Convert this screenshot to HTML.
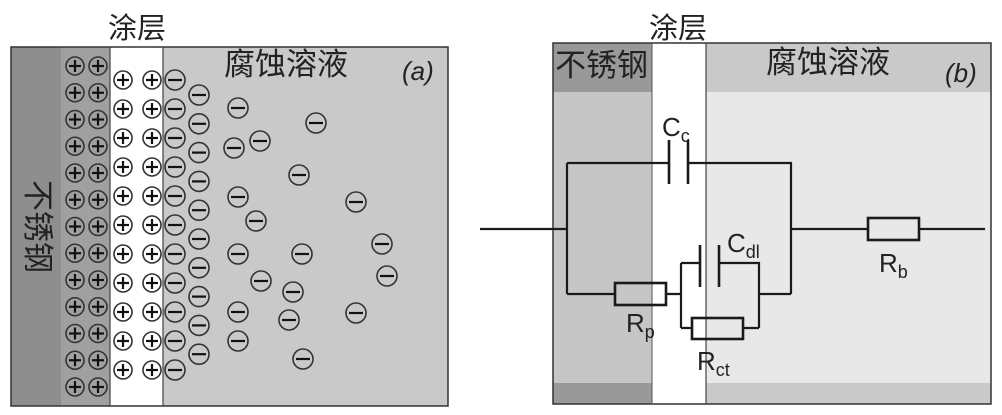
<!DOCTYPE html>
<html><head><meta charset="utf-8"><style>
html,body{margin:0;padding:0;background:#fff;}
svg{display:block;}
text{font-family:"Liberation Sans","Noto Sans CJK SC",sans-serif;fill:#222;}
.cjk{font-family:"Noto Sans CJK SC","WenQuanYi Zen Hei",sans-serif;}
.w{stroke:#1a1a1a;stroke-width:2.2;fill:none;}
.r{stroke:#1a1a1a;stroke-width:2.6;fill:none;}
</style></head><body>
<svg id="s" width="1002" height="415" viewBox="0 0 1002 415" xmlns="http://www.w3.org/2000/svg">
<rect x="11" y="47" width="50" height="359" fill="#8e8e8e"/>
<rect x="61" y="47" width="49" height="359" fill="#a0a0a0"/>
<rect x="110" y="47" width="53" height="359" fill="#fff"/>
<rect x="163" y="47" width="285" height="359" fill="#c9c9c9"/>
<rect x="11" y="47" width="437" height="359" fill="none" stroke="#333" stroke-width="1.5"/>
<line x1="110" y1="47" x2="110" y2="406" stroke="#444" stroke-width="1.2"/>
<line x1="163" y1="47" x2="163" y2="406" stroke="#444" stroke-width="1.2"/>
<g id="ions"></g>
<text x="137" y="38" class="cjk" font-size="29" text-anchor="middle">涂层</text>
<text x="224" y="75" class="cjk" font-size="31">腐蚀溶液</text>
<text x="402" y="80" font-size="26" font-style="italic" fill="#333">(a)</text>
<text class="cjk" font-size="31" transform="translate(27,180) rotate(90)">不锈钢</text>

<rect x="553" y="43" width="99" height="361" fill="#999"/>
<rect x="553" y="92" width="99" height="291" fill="#c6c6c6"/>
<rect x="652" y="43" width="54" height="361" fill="#fff"/>
<rect x="706" y="43" width="285" height="361" fill="#c9c9c9"/>
<rect x="706" y="92" width="285" height="291" fill="#e8e8e8"/>
<rect x="553" y="43" width="438" height="361" fill="none" stroke="#333" stroke-width="1.5"/>
<line x1="652" y1="43" x2="652" y2="404" stroke="#555" stroke-width="1"/>
<line x1="706" y1="43" x2="706" y2="404" stroke="#444" stroke-width="1.2"/>
<text x="678" y="38" class="cjk" font-size="29" text-anchor="middle">涂层</text>
<text x="555" y="76" class="cjk" font-size="31">不锈钢</text>
<text x="766" y="73" class="cjk" font-size="31">腐蚀溶液</text>
<text x="945" y="82" font-size="26" font-style="italic" fill="#333">(b)</text>

<path class="w" d="M480 229H567M567 163V294M567 163H669M688 163H791V294M791 229H868M919 229H985"/>
<path class="r" d="M669 140V184M688 140V184"/>
<rect class="r" x="868" y="218" width="51" height="22"/>
<path class="w" d="M567 294H615M666 294H681M681 263V328M681 263H700M719 263H759V328M759 294H791M681 328H692M743 328H759"/>
<path class="r" d="M700 245V287M719 245V287"/>
<rect class="r" x="615" y="283" width="51" height="22"/>
<rect class="r" x="692" y="318" width="51" height="21"/>
<text x="662" y="136" font-size="26">C<tspan font-size="18" dy="6">c</tspan></text>
<text x="727" y="252" font-size="26">C<tspan font-size="18" dy="6">dl</tspan></text>
<text x="879" y="272" font-size="26">R<tspan font-size="18" dy="6">b</tspan></text>
<text x="626" y="332" font-size="26">R<tspan font-size="18" dy="6">p</tspan></text>
<text x="697" y="370" font-size="26">R<tspan font-size="18" dy="6">ct</tspan></text>
</svg>
<script>
var g=document.getElementById('ions'),h='';
function c(x,y,p,r){r=r||9;h+='<circle cx="'+x+'" cy="'+y+'" r="'+r+'" fill="none" stroke="#333" stroke-width="1.6"/>'+'<line x1="'+(x-r+3)+'" y1="'+y+'" x2="'+(x+r-3)+'" y2="'+y+'" stroke="#111" stroke-width="2.2"/>';if(p)h+='<line x1="'+x+'" y1="'+(y-r+3)+'" x2="'+x+'" y2="'+(y+r-3)+'" stroke="#111" stroke-width="2.2"/>';}
for(var i=0;i<13;i++){var y=66+i*26.75;c(75,y,1);c(98,y,1);}
for(var i=0;i<11;i++){var y=80+i*29;c(123,y,1);c(152,y,1);c(175,y,0,10);}
for(var i=0;i<10;i++){c(199,95+i*28.8,0,10);}
[[238,108],[316,123],[260,141],[234,148],[299,175],[238,197],[356,202],[256,221],[382,244],[238,254],[302,254],[387,276],[261,281],[293,292],[238,312],[289,320],[356,313],[238,341],[303,359]].forEach(function(p){c(p[0],p[1],0,10);});
g.innerHTML=h;
</script>
</body></html>
